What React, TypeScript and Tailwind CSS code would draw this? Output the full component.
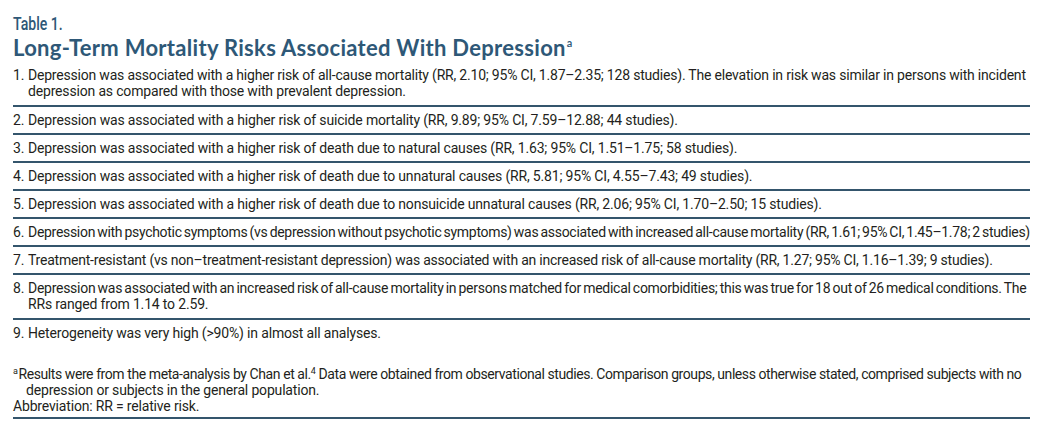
import React from "react";

const rows: { n: string; text: string }[] = [
  { n: "2.", text: "Depression was associated with a higher risk of suicide mortality (RR, 9.89; 95% CI, 7.59–12.88; 44 studies)." },
  { n: "3.", text: "Depression was associated with a higher risk of death due to natural causes (RR, 1.63; 95% CI, 1.51–1.75; 58 studies)." },
  { n: "4.", text: "Depression was associated with a higher risk of death due to unnatural causes (RR, 5.81; 95% CI, 4.55–7.43; 49 studies)." },
  { n: "5.", text: "Depression was associated with a higher risk of death due to nonsuicide unnatural causes (RR, 2.06; 95% CI, 1.70–2.50; 15 studies)." },
];

function Row({ n, children, cls, last }: { n: string; children: React.ReactNode; cls?: string; last?: boolean }) {
  return (
    <div className={"flex " + (cls ?? "py-[5px]") + (last ? "" : " border-b-2 border-[#34556c]")}>
      <span className="w-[15px] shrink-0">{n}</span>
      <div className="flex-1 whitespace-nowrap">{children}</div>
    </div>
  );
}

export default function App() {
  return (
    <div className="w-[1043px] h-[433px] bg-white overflow-hidden">
      <div
        className="ml-[13px] w-[1017px] pt-[12px] text-[14px] leading-[16px] tracking-[-0.17px] text-[#231f20]"
        style={{ fontFamily: "Roboto, 'Liberation Sans', sans-serif" }}
      >
        <div className="h-[22px] flex items-center tracking-normal">
          <span className="inline-block origin-left scale-x-[0.74] text-[19px] font-medium text-[#2e5877] whitespace-nowrap translate-y-[1px]">
            Table 1.
          </span>
        </div>
        <div
          className="h-[28px] flex items-center text-[22px] font-bold tracking-[0.3px] text-[#2e5877] whitespace-nowrap"
          style={{ fontFamily: "Lato, 'Open Sans', sans-serif" }}
        >
          Long-Term Mortality Risks Associated With Depression
          <sup className="text-[11px] font-semibold relative -top-[5px] ml-[1px]">a</sup>
        </div>
        <Row n="1." cls="pt-[5px] pb-[6px]">
          <div className="tracking-[-0.2px]">
            Depression was associated with a higher risk of all-cause mortality (RR, 2.10; 95% CI, 1.87–2.35; 128 studies). The elevation in risk was similar in persons with incident
          </div>
          <div>depression as compared with those with prevalent depression.</div>
        </Row>
        {rows.map((r) => (
          <Row key={r.n} n={r.n}>
            {r.text}
          </Row>
        ))}
        <Row n="6.">
          <span className="tracking-[-0.3px] [word-spacing:-1px]">
            Depression with psychotic symptoms (vs depression without psychotic symptoms) was associated with increased all-cause mortality (RR, 1.61; 95% CI, 1.45–1.78; 2 studies)
          </span>
        </Row>
        <Row n="7.">
          <span className="tracking-[-0.22px]">
            Treatment-resistant (vs non–treatment-resistant depression) was associated with an increased risk of all-cause mortality (RR, 1.27; 95% CI, 1.16–1.39; 9 studies).
          </span>
        </Row>
        <Row n="8." cls="pt-[5px] pb-[6px]">
          <div className="tracking-[-0.27px] [word-spacing:-1px]">
            Depression was associated with an increased risk of all-cause mortality in persons matched for medical comorbidities; this was true for 18 out of 26 medical conditions. The
          </div>
          <div>RRs ranged from 1.14 to 2.59.</div>
        </Row>
        <Row n="9." last>
          Heterogeneity was very high (&gt;90%) in almost all analyses.
        </Row>
        <div className="mt-[20px] pb-[3px] border-b-2 border-[#34556c]">
          <div className="whitespace-nowrap tracking-[-0.42px]">
            <sup className="text-[9px] relative -top-[5px] mr-[1px]">a</sup>Results were from the meta-analysis by Chan et al.
            <sup className="text-[9px] relative -top-[5px]">4</sup> Data were obtained from observational studies. Comparison groups, unless otherwise stated, comprised subjects with no
          </div>
          <div className="pl-[13px]">depression or subjects in the general population.</div>
          <div>Abbreviation: RR = relative risk.</div>
        </div>
      </div>
    </div>
  );
}
